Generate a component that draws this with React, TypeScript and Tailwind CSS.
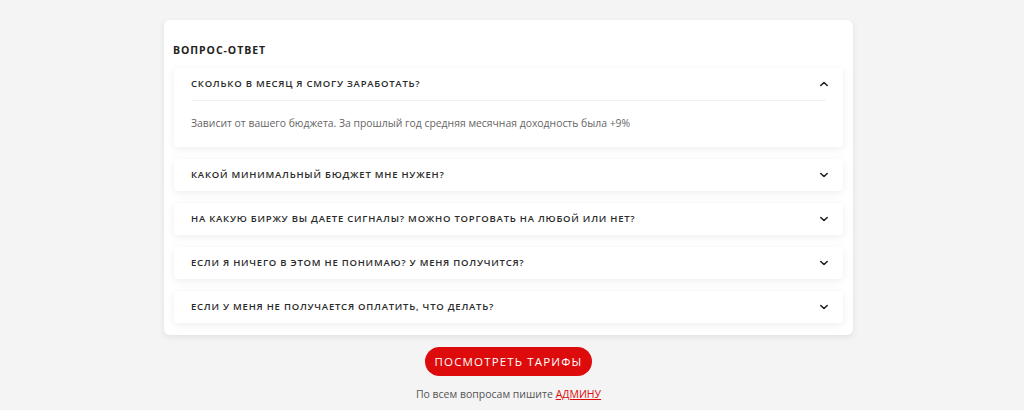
import React, { useState } from 'react';

interface FaqItem {
  question: string;
  answer: string;
}

const faqItems: FaqItem[] = [
  {
    question: 'Сколько в месяц я смогу заработать?',
    answer: 'Зависит от вашего бюджета. За прошлый год средняя месячная доходность была +9%',
  },
  { question: 'Какой минимальный бюджет мне нужен?', answer: '' },
  { question: 'На какую биржу вы даете сигналы? Можно торговать на любой или нет?', answer: '' },
  { question: 'Если я ничего в этом не понимаю? У меня получится?', answer: '' },
  { question: 'Если у меня не получается оплатить, что делать?', answer: '' },
];

const Chevron: React.FC<{ up?: boolean }> = ({ up }) => (
  <svg width="10" height="6" viewBox="0 0 10 6" className={up ? 'rotate-180' : ''}>
    <path d="M1.8 1.5 L5 4.5 L8.2 1.5" fill="none" stroke="#222" strokeWidth="1.6" strokeLinecap="round" strokeLinejoin="round" />
  </svg>
);

export default function App() {
  const [open, setOpen] = useState(0);

  return (
    <div className="h-[410px] bg-[#f4f4f4] pt-[20px] font-['Open_Sans',sans-serif] overflow-hidden">
      <div className="ml-[164px] w-[689px]">
        <div className="rounded-md bg-white px-[10px] pt-[23px] pb-[12px] shadow-[0_2px_6px_rgba(0,0,0,0.08)]">
          <h2 className="-ml-[1px] text-[10.5px] font-bold uppercase tracking-[0.09em] text-[#222] leading-[14px]">
            Вопрос-ответ
          </h2>
          <div className="mt-[11px] flex flex-col gap-[12px]">
            {faqItems.map((item, i) => (
              <div key={i} className="rounded-sm bg-white shadow-[0_2px_8px_rgba(0,0,0,0.07)]">
                <button
                  onClick={() => setOpen(open === i ? -1 : i)}
                  className="flex h-[32px] w-full items-center justify-between pl-[17px] pr-[14px] text-left"
                >
                  <span className="text-[9.5px] font-semibold uppercase tracking-[0.08em] text-[#2a2a2a]">
                    {item.question}
                  </span>
                  <Chevron up={open === i} />
                </button>
                {open === i && (
                  <div className="mx-[17px] border-t border-[#f1f1f1] pt-[15px] pb-[17px] text-[10.4px] text-[#666] leading-[14px]">
                    {item.answer}
                  </div>
                )}
              </div>
            ))}
          </div>
        </div>
        <div className="mt-[12px] flex flex-col items-center">
          <button className="h-[29px] rounded-full bg-[#dd0b0b] px-[10px] text-[11.5px] uppercase tracking-[0.1em] text-white">
            Посмотреть тарифы
          </button>
          <p className="mt-[11px] text-[10.5px] text-[#555]">
            По всем вопросам пишите{' '}
            <a href="#" className="text-[#dd0b0b] underline">
              АДМИНУ
            </a>
          </p>
        </div>
      </div>
    </div>
  );
}
